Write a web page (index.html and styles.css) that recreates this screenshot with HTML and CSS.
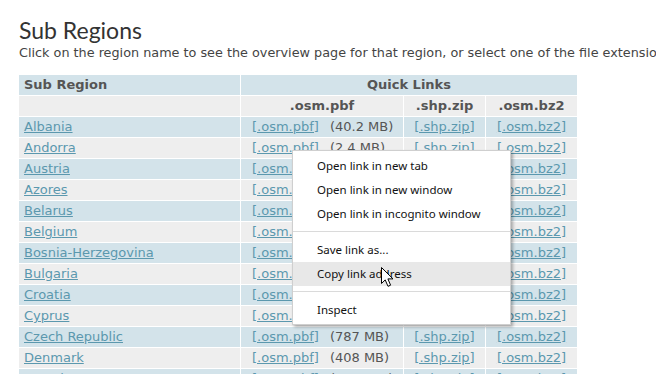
FILE: index.html
```html
<!DOCTYPE html>
<html lang="en">
<head>
    <meta charset="UTF-8">
    <title>Sub Regions</title>
    <link rel="stylesheet" href="styles.css">
</head>
<body>
    <div class="page">
        <h2 class="title">Sub Regions</h2>
        <p class="intro">Click on the region name to see the overview page for that region, or select one of the file extensions to download that file format directly.</p>

        <table class="regions">
            <colgroup>
                <col class="c-name">
                <col class="c-pbf">
                <col class="c-zip">
                <col class="c-bz2">
            </colgroup>
            <tr class="head-top">
                <th class="name-head">Sub Region</th>
                <th colspan="3">Quick Links</th>
            </tr>
            <tr class="head-sub">
                <th></th>
                <th>.osm.pbf</th>
                <th>.shp.zip</th>
                <th>.osm.bz2</th>
            </tr>
            <tr class="blue"><td><a href="#">Albania</a></td><td class="pbf"><a href="#">[.osm.pbf]</a><span class="size">(40.2 MB)</span></td><td><a href="#">[.shp.zip]</a></td><td><a href="#">[.osm.bz2]</a></td></tr>
            <tr class="grey"><td><a href="#">Andorra</a></td><td class="pbf"><a href="#">[.osm.pbf]</a><span class="size">(2.4 MB)</span></td><td><a href="#">[.shp.zip]</a></td><td><a href="#">[.osm.bz2]</a></td></tr>
            <tr class="blue"><td><a href="#">Austria</a></td><td class="pbf"><a href="#">[.osm.pbf]</a><span class="size">(576 MB)</span></td><td><a href="#">[.shp.zip]</a></td><td><a href="#">[.osm.bz2]</a></td></tr>
            <tr class="grey"><td><a href="#">Azores</a></td><td class="pbf"><a href="#">[.osm.pbf]</a><span class="size">(9.5 MB)</span></td><td><a href="#">[.shp.zip]</a></td><td><a href="#">[.osm.bz2]</a></td></tr>
            <tr class="blue"><td><a href="#">Belarus</a></td><td class="pbf"><a href="#">[.osm.pbf]</a><span class="size">(215 MB)</span></td><td><a href="#">[.shp.zip]</a></td><td><a href="#">[.osm.bz2]</a></td></tr>
            <tr class="grey"><td><a href="#">Belgium</a></td><td class="pbf"><a href="#">[.osm.pbf]</a><span class="size">(331 MB)</span></td><td><a href="#">[.shp.zip]</a></td><td><a href="#">[.osm.bz2]</a></td></tr>
            <tr class="blue"><td><a href="#">Bosnia-Herzegovina</a></td><td class="pbf"><a href="#">[.osm.pbf]</a><span class="size">(63.5 MB)</span></td><td><a href="#">[.shp.zip]</a></td><td><a href="#">[.osm.bz2]</a></td></tr>
            <tr class="grey"><td><a href="#">Bulgaria</a></td><td class="pbf"><a href="#">[.osm.pbf]</a><span class="size">(86.1 MB)</span></td><td><a href="#">[.shp.zip]</a></td><td><a href="#">[.osm.bz2]</a></td></tr>
            <tr class="blue"><td><a href="#">Croatia</a></td><td class="pbf"><a href="#">[.osm.pbf]</a><span class="size">(110 MB)</span></td><td><a href="#">[.shp.zip]</a></td><td><a href="#">[.osm.bz2]</a></td></tr>
            <tr class="grey"><td><a href="#">Cyprus</a></td><td class="pbf"><a href="#">[.osm.pbf]</a><span class="size">(21.3 MB)</span></td><td><a href="#">[.shp.zip]</a></td><td><a href="#">[.osm.bz2]</a></td></tr>
            <tr class="blue"><td><a href="#">Czech Republic</a></td><td class="pbf"><a href="#">[.osm.pbf]</a><span class="size">(787 MB)</span></td><td><a href="#">[.shp.zip]</a></td><td><a href="#">[.osm.bz2]</a></td></tr>
            <tr class="grey"><td><a href="#">Denmark</a></td><td class="pbf"><a href="#">[.osm.pbf]</a><span class="size">(408 MB)</span></td><td><a href="#">[.shp.zip]</a></td><td><a href="#">[.osm.bz2]</a></td></tr>
            <tr class="blue"><td><a href="#">Estonia</a></td><td class="pbf"><a href="#">[.osm.pbf]</a><span class="size">(94.0 MB)</span></td><td><a href="#">[.shp.zip]</a></td><td><a href="#">[.osm.bz2]</a></td></tr>
        </table>
    </div>

    <!-- right-click menu over the Andorra link -->
    <div class="context-menu">
        <div class="menu-item">Open link in new tab</div>
        <div class="menu-item">Open link in new window</div>
        <div class="menu-item">Open link in incognito window</div>
        <div class="menu-sep"></div>
        <div class="menu-item">Save link as...</div>
        <div class="menu-item active">Copy link address</div>
        <div class="menu-sep"></div>
        <div class="menu-item">Inspect</div>
    </div>

    <svg class="cursor" width="14" height="22" viewBox="0 0 14 22">
        <path d="M1.5 1.5 V17.5 L5.2 13.9 L8 20.3 L10.6 19.2 L7.9 12.9 H13 Z" fill="#fff" stroke="#000" stroke-width="1" stroke-linejoin="miter"/>
    </svg>
</body>
</html>
```

FILE: styles.css
```css
body {
    margin: 0;
    background-color: #fff;
    font-family: "DejaVu Sans", Verdana, sans-serif;
    color: #444;
    overflow: hidden;
}
.page {
    padding: 17px 0 0 19px;
}
.title {
    margin: 0;
    font-family: Lato, "Noto Sans", sans-serif;
    font-weight: normal;
    font-size: 23px;
    line-height: 26px;
    color: #333;
}
.intro {
    margin: 2px 0 0 0;
    font-size: 12.8px;
    line-height: 16px;
    white-space: nowrap;
    color: #444;
}
.regions {
    margin: 13px 0 0 -1px;
    border-collapse: separate;
    border-spacing: 1px;
    table-layout: fixed;
    width: 560px;
    font-size: 13px;
}
.c-name { width: 221px; }
.c-pbf { width: 162px; }
.c-zip { width: 81px; }
.c-bz2 { width: 91px; }
.regions th, .regions td {
    height: 20px;
    padding: 0 5px;
    line-height: 20px;
    white-space: nowrap;
    overflow: hidden;
}
.regions th {
    font-weight: bold;
    color: #555;
    text-align: center;
}
.head-top th { background-color: #d3e3ea; }
.head-top .name-head { text-align: left; }
.head-sub th { background-color: #eeeeee; }
.regions td { text-align: center; }
.regions td:first-child { text-align: left; }
.regions td.pbf {
    text-align: left;
    padding-left: 11px;
}
.blue td { background-color: #d3e3ea; }
.grey td { background-color: #eeeeee; }
.regions a {
    color: #5b98ae;
    text-decoration: underline;
}
.size {
    margin-left: 11px;
    color: #555;
}
.context-menu {
    position: absolute;
    left: 292px;
    top: 150px;
    width: 217px;
    padding: 3px 0 2px 0;
    background-color: #fff;
    border: 1px solid #cfcfcf;
    box-shadow: 2px 2px 3px rgba(0, 0, 0, 0.3);
    font-family: "Noto Sans", "Open Sans", sans-serif;
    font-size: 11.5px;
    color: #111;
}
.menu-item {
    height: 24px;
    line-height: 24px;
    padding-left: 24px;
}
.menu-item.active {
    background-color: #e8e8e8;
}
.menu-sep {
    height: 1px;
    margin: 5px 0 6px 0;
    background-color: #dadada;
}
.cursor {
    position: absolute;
    left: 380px;
    top: 266px;
}
```
